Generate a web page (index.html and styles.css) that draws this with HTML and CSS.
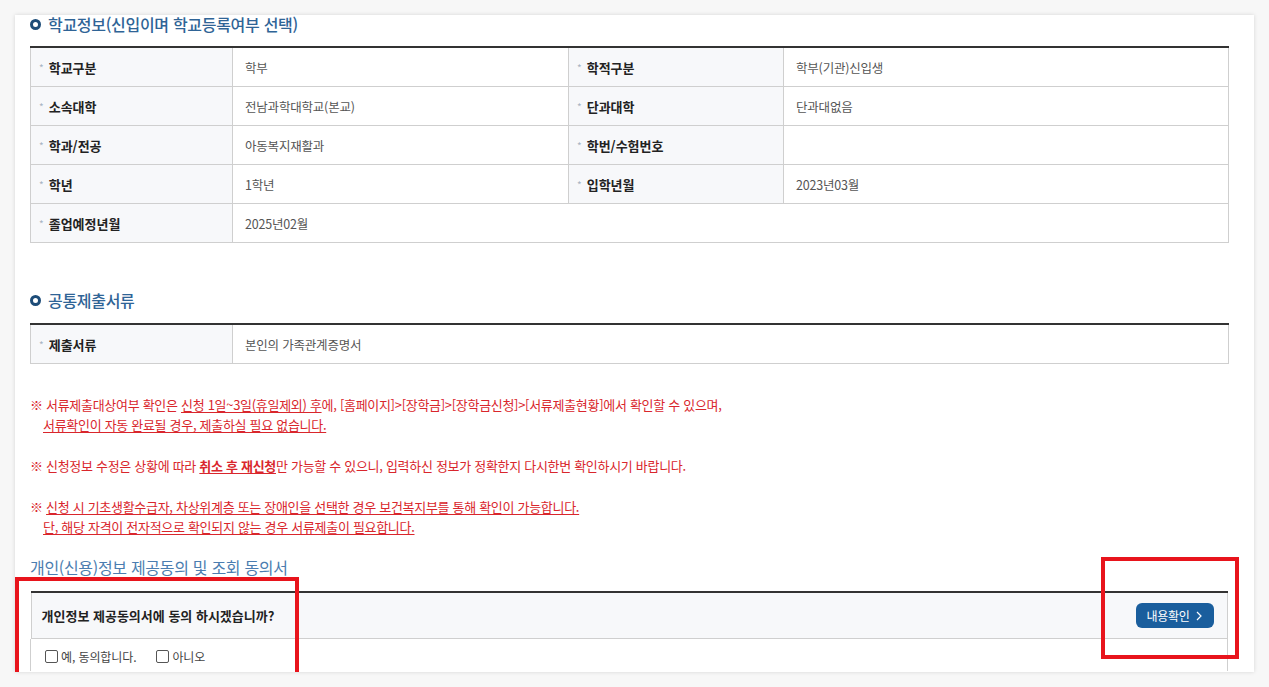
FILE: index.html
```html
<!DOCTYPE html>
<html lang="ko">
<head>
<meta charset="utf-8">
<title>학교정보</title>
<link rel="stylesheet" href="styles.css">
</head>
<body>
<div class="card">
  <h2 class="sec-title"><span class="ring"></span>학교정보(신입이며 학교등록여부 선택)</h2>
  <table class="info">
    <colgroup><col class="c1"><col class="c2"><col class="c3"><col class="c4"></colgroup>
    <tr><th><span class="ast">*</span>학교구분</th><td>학부</td><th><span class="ast">*</span>학적구분</th><td>학부(기관)신입생</td></tr>
    <tr><th><span class="ast">*</span>소속대학</th><td>전남과학대학교(본교)</td><th><span class="ast">*</span>단과대학</th><td>단과대없음</td></tr>
    <tr><th><span class="ast">*</span>학과/전공</th><td>아동복지재활과</td><th><span class="ast">*</span>학번/수험번호</th><td></td></tr>
    <tr><th><span class="ast">*</span>학년</th><td>1학년</td><th><span class="ast">*</span>입학년월</th><td>2023년03월</td></tr>
    <tr><th><span class="ast">*</span>졸업예정년월</th><td colspan="3">2025년02월</td></tr>
  </table>

  <h2 class="sec-title second"><span class="ring"></span>공통제출서류</h2>
  <table class="info">
    <colgroup><col class="c1"><col class="c2"><col class="c3"><col class="c4"></colgroup>
    <tr><th><span class="ast">*</span>제출서류</th><td colspan="3">본인의 가족관계증명서</td></tr>
  </table>

  <div class="notes">
    <p>※ 서류제출대상여부 확인은 <u>신청 1일~3일(휴일제외) 후</u>에, [홈페이지]&gt;[장학금]&gt;[장학금신청]&gt;[서류제출현황]에서 확인할 수 있으며,<br><u>서류확인이 자동 완료될 경우, 제출하실 필요 없습니다.</u></p>
    <p>※ 신청정보 수정은 상황에 따라 <u><b>취소 후 재신청</b></u>만 가능할 수 있으니, 입력하신 정보가 정확한지 다시한번 확인하시기 바랍니다.</p>
    <p>※ <u>신청 시 기초생활수급자, 차상위계층 또는 장애인을 선택한 경우 보건복지부를 통해 확인이 가능합니다.</u><br><u>단, 해당 자격이 전자적으로 확인되지 않는 경우 서류제출이 필요합니다.</u></p>
  </div>

  <h3 class="consent-title">개인(신용)정보 제공동의 및 조회 동의서</h3>
  <table class="consent">
    <tr class="q"><td><span class="qtext">개인정보 제공동의서에 동의 하시겠습니까?</span><button class="btn">내용확인<svg class="chev" width="6" height="10" viewBox="0 0 6 10"><path d="M1 1 L5 5 L1 9" fill="none" stroke="#fff" stroke-width="1.2"/></svg></button></td></tr>
    <tr class="a"><td><label class="chk"><span class="box"></span>예, 동의합니다.</label><label class="chk"><span class="box"></span>아니오</label></td></tr>
  </table>

  <div class="mark mark-left"></div>
  <div class="mark mark-right"></div>
</div>
</body>
</html>
```

FILE: styles.css
```css
html, body { margin: 0; padding: 0; }
body {
  background: #f7f7f7;
  font-family: "Noto Sans CJK KR", "Noto Sans", sans-serif;
  color: #333;
  padding: 15px;
  width: 1239px;
}
.card {
  position: relative;
  background: #fff;
  box-shadow: 0 0 4px rgba(0,0,0,0.14);
  width: 1198px;
  height: 657px;
  padding: 0 26px 0 15px;
}
.sec-title {
  margin: 0 0 12px;
  font-size: 16px;
  line-height: 19px;
  font-weight: 500;
  color: #2f6496;
  display: flex;
  align-items: center;
  letter-spacing: -0.3px;
}
.sec-title.second { margin-top: 48px; margin-bottom: 13px; }
.ring {
  width: 5px; height: 5px;
  border: 3px solid #1d4c78;
  border-radius: 50%;
  margin-right: 7px;
  flex: none;
}
table { border-collapse: collapse; width: 1198px; table-layout: fixed; }
.info { border-top: 2px solid #333; }
.c1 { width: 202px; } .c2 { width: 336px; } .c3 { width: 215px; } .c4 { width: 445px; }
.info th, .info td {
  height: 38px;
  padding: 0;
  border: 1px solid #cfcfcf;
  border-top: none;
  font-size: 12px;
  text-align: left;
}
.info th {
  background: #f7f8fa;
  font-weight: 700;
  font-size: 13px;
  color: #222;
  padding-left: 8px;
  letter-spacing: 0;
}
.info td { color: #555; padding-left: 12px; font-size: 12.5px; letter-spacing: -0.2px; }
.ast { color: #a8b4c2; font-weight: 400; font-size: 10px; margin-right: 5px; vertical-align: 1px; }

.notes { margin-top: 31px; color: #d9262c; font-size: 13px; line-height: 20px; letter-spacing: -0.3px; }
.notes p { margin: 0 0 21px; padding-left: 13px; text-indent: -13px; }
.notes p:last-child { margin-bottom: 0; }
.notes u { text-underline-offset: 2px; }

.consent-title {
  margin: 20px 0 14px;
  font-size: 16px;
  line-height: 20px;
  font-weight: 400;
  color: #4b7db0;
  letter-spacing: -0.3px;
}
.consent { border-top: 2px solid #333; }
.consent td { border: 1px solid #cfcfcf; border-top: none; border-bottom: none; padding: 0; }
.consent .q td {
  height: 45px;
  background: #f7f8fa;
  border-bottom: 1px solid #cfcfcf;
  padding: 0 13px 0 10px;
  display: flex;
  align-items: center;
  justify-content: space-between;
}
.qtext { font-size: 13px; font-weight: 700; color: #222; letter-spacing: 0; }
.btn {
  width: 78px; height: 25px;
  background: #1a5e9d;
  color: #fff;
  border: none;
  border-radius: 6px;
  font-family: inherit;
  font-size: 12px;
  padding: 0;
  display: flex; align-items: center; justify-content: center;
  letter-spacing: -0.3px;
}
.chev { margin-left: 7px; }
.consent .a td { height: 32px; padding: 3px 0 0 14px; box-sizing: border-box; vertical-align: middle; font-size: 12px; color: #444; }
.chk { display: inline-flex; align-items: center; margin-right: 20px; letter-spacing: -0.1px; }
.box {
  width: 11px; height: 11px;
  border: 1px solid #555;
  border-radius: 2px;
  background: #fff;
  margin-right: 3px;
}

.mark { position: absolute; border: 4px solid #e8141c; box-sizing: border-box; }
.mark-left { left: 0; top: 562px; width: 284px; height: 95px; border-bottom: none; }
.mark-right { left: 1086px; top: 542px; width: 138px; height: 102px; }
```
